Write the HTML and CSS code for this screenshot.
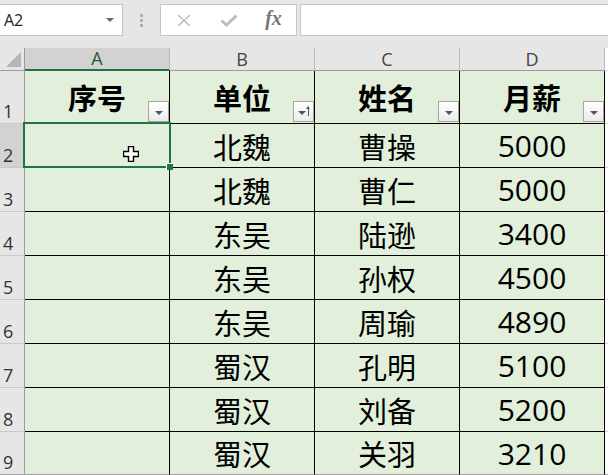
FILE: index.html
```html
<!DOCTYPE html>
<html>
<head>
  <link rel="stylesheet" href="styles.css">
</head>
<body>
  <div class="toolbar">
    <div class="namebox">
      <span>A2</span>
      <span class="drop"></span>
    </div>
    <div class="grip"><i></i><i></i><i></i></div>
    <div class="fbuttons">
      <span class="fbtn">
        <svg width="16" height="13" viewBox="0 0 16 13"><path d="M2 1 L14 12 M14 1 L2 12" stroke="#bdbdbd" stroke-width="1.6" fill="none"/></svg>
      </span>
      <span class="fbtn">
        <svg width="18" height="13" viewBox="0 0 18 13"><path d="M1.5 6.5 L6.5 11 L16.5 1.5" stroke="#bdbdbd" stroke-width="3" fill="none"/></svg>
      </span>
      <span class="fbtn fx">fx</span>
    </div>
    <div class="formula"></div>
  </div>

  <div class="sheet">
    <!-- column headings -->
    <div class="colhead corner"><span class="tri"></span></div>
    <div class="colhead active">A</div>
    <div class="colhead">B</div>
    <div class="colhead">C</div>
    <div class="colhead">D</div>
    <div class="colhead rest"></div>

    <!-- row 1: table headers -->
    <div class="rowhead">1</div>
    <div class="cell th">序号<span class="filter"><b></b></span></div>
    <div class="cell th">单位<span class="filter sorted"><b></b><em></em></span></div>
    <div class="cell th">姓名<span class="filter"><b></b></span></div>
    <div class="cell th">月薪<span class="filter"><b></b></span></div>
    <div class="rest"></div>

    <div class="rowhead active">2</div>
    <div class="cell">
      <div class="sel"><span class="handle"></span></div>
      <svg class="cursor" width="16" height="16" viewBox="0 0 16 16"><path d="M5.5 0.5 H10.5 V5.5 H15.5 V10.5 H10.5 V15.5 H5.5 V10.5 H0.5 V5.5 H5.5 Z" fill="#fff" stroke="#000" stroke-width="1.4"/></svg>
    </div>
    <div class="cell">北魏</div>
    <div class="cell">曹操</div>
    <div class="cell num">5000</div>
    <div class="rest"></div>

    <div class="rowhead">3</div>
    <div class="cell"></div>
    <div class="cell">北魏</div>
    <div class="cell">曹仁</div>
    <div class="cell num">5000</div>
    <div class="rest"></div>

    <div class="rowhead">4</div>
    <div class="cell"></div>
    <div class="cell">东吴</div>
    <div class="cell">陆逊</div>
    <div class="cell num">3400</div>
    <div class="rest"></div>

    <div class="rowhead">5</div>
    <div class="cell"></div>
    <div class="cell">东吴</div>
    <div class="cell">孙权</div>
    <div class="cell num">4500</div>
    <div class="rest"></div>

    <div class="rowhead">6</div>
    <div class="cell"></div>
    <div class="cell">东吴</div>
    <div class="cell">周瑜</div>
    <div class="cell num">4890</div>
    <div class="rest"></div>

    <div class="rowhead">7</div>
    <div class="cell"></div>
    <div class="cell">蜀汉</div>
    <div class="cell">孔明</div>
    <div class="cell num">5100</div>
    <div class="rest"></div>

    <div class="rowhead">8</div>
    <div class="cell"></div>
    <div class="cell">蜀汉</div>
    <div class="cell">刘备</div>
    <div class="cell num">5200</div>
    <div class="rest"></div>

    <div class="rowhead last">9</div>
    <div class="cell last"></div>
    <div class="cell last">蜀汉</div>
    <div class="cell last">关羽</div>
    <div class="cell last num">3210</div>
    <div class="rest last"></div>
  </div>
</body>
</html>
```

FILE: styles.css
```css
body {
  margin: 0;
  width: 608px;
  height: 475px;
  overflow: hidden;
  background: #e6e6e6;
  font-family: "Noto Sans CJK SC", sans-serif;
  color: #000;
}

/* formula bar */

.toolbar {
  height: 48px;
  box-sizing: border-box;
  padding-top: 4px;
  display: flex;
  align-items: flex-start;
  background: #e6e6e6;
}

.namebox {
  width: 124px;
  height: 32px;
  margin-left: -1px;
  box-sizing: border-box;
  border: 1px solid #c6c6c6;
  background: #fff;
  display: flex;
  align-items: center;
  justify-content: space-between;
  padding: 0 8px 0 4px;
  font: 16px "Open Sans", sans-serif;
  color: #222;
}

.drop {
  width: 0;
  height: 0;
  border-left: 4px solid transparent;
  border-right: 4px solid transparent;
  border-top: 4px solid #666;
}

.grip {
  width: 37px;
  height: 32px;
  display: flex;
  flex-direction: column;
  align-items: center;
  justify-content: center;
  gap: 2px;
}

.grip i {
  width: 3px;
  height: 3px;
  background: #b1b1b1;
}

.fbuttons {
  width: 137px;
  height: 32px;
  box-sizing: border-box;
  border: 1px solid #c6c6c6;
  background: #fff;
  display: flex;
  align-items: center;
}

.fbtn {
  width: 45px;
  display: flex;
  justify-content: center;
  align-items: center;
}

.fx {
  font: italic bold 20px "Liberation Serif", serif;
  color: #767676;
  margin-top: -3px;
}

.formula {
  flex: 1;
  height: 32px;
  margin: 0 -1px 0 3px;
  box-sizing: border-box;
  border: 1px solid #c6c6c6;
  background: #fff;
}

/* sheet grid */

.sheet {
  display: grid;
  grid-template-columns: 25px 145px 145px 145px 145px 1fr;
  grid-template-rows: 23px 53px repeat(7, 44px) 43px;
}

.colhead {
  background: #e6e6e6;
  border-right: 1px solid #b9b9b9;
  border-bottom: 1px solid #9b9b9b;
  display: flex;
  align-items: flex-end;
  justify-content: center;
  box-sizing: border-box;
  font: 18px/22px "Open Sans", sans-serif;
  color: #444;
}

.colhead.active {
  background: #d2d2d2;
  border-bottom: 2px solid #217346;
  color: #1d5b3a;
}

.colhead.corner {
  position: relative;
  border-right-color: #9b9b9b;
}

.tri {
  position: absolute;
  right: 3px;
  bottom: 3px;
  width: 0;
  height: 0;
  border-left: 15px solid transparent;
  border-bottom: 15px solid #b6b6b6;
}

.colhead.rest {
  border-right: none;
}

.rowhead {
  background: #e6e6e6;
  border-right: 1px solid #9b9b9b;
  border-bottom: 1px solid #c9c9c9;
  display: flex;
  align-items: flex-end;
  padding: 0 0 0 3px;
  box-sizing: border-box;
  font: 18px/24px "Open Sans", sans-serif;
  color: #333;
}

.rowhead.active {
  background: #d2d2d2;
}

.cell {
  position: relative;
  background: #e2efda;
  border-right: 1px solid #000;
  border-bottom: 1px solid #000;
  display: flex;
  align-items: center;
  justify-content: center;
  font-size: 29px;
}

.cell.th {
  font-weight: bold;
}

.cell.num {
  font-family: "Open Sans", "Noto Sans CJK SC", sans-serif;
  font-size: 30px;
}

.rest {
  background: #fff;
  border-bottom: 1px solid #d4d4d4;
}

.last {
  border-bottom-color: #a0a0a0;
}

/* filter buttons */

.filter {
  position: absolute;
  right: 0;
  bottom: 1px;
  width: 21px;
  height: 21px;
  box-sizing: border-box;
  border: 1px solid #a6a6a6;
  background: linear-gradient(#ffffff, #ebebeb);
  display: flex;
  align-items: center;
  justify-content: center;
}

.filter b {
  width: 0;
  height: 0;
  margin-top: 3px;
  border-left: 4px solid transparent;
  border-right: 4px solid transparent;
  border-top: 4px solid #555;
}

.filter.sorted {
  justify-content: flex-start;
  padding-left: 4px;
}

.filter.sorted em {
  position: absolute;
  right: 4px;
  top: 5px;
  width: 1px;
  height: 9px;
  background: #555;
}

.filter.sorted em::before {
  content: "";
  position: absolute;
  left: -2px;
  top: -1px;
  border-left: 2.5px solid transparent;
  border-right: 2.5px solid transparent;
  border-bottom: 3px solid #555;
}

/* selection */

.sel {
  position: absolute;
  left: -2px;
  top: -2px;
  right: -2px;
  bottom: -1px;
  border: 2px solid #217346;
  z-index: 2;
}

.handle {
  position: absolute;
  right: -4px;
  bottom: -4px;
  width: 6px;
  height: 6px;
  background: #217346;
  border-left: 1px solid #fff;
  border-top: 1px solid #fff;
}

.cursor {
  position: absolute;
  left: 98px;
  top: 22px;
  z-index: 3;
}
```
